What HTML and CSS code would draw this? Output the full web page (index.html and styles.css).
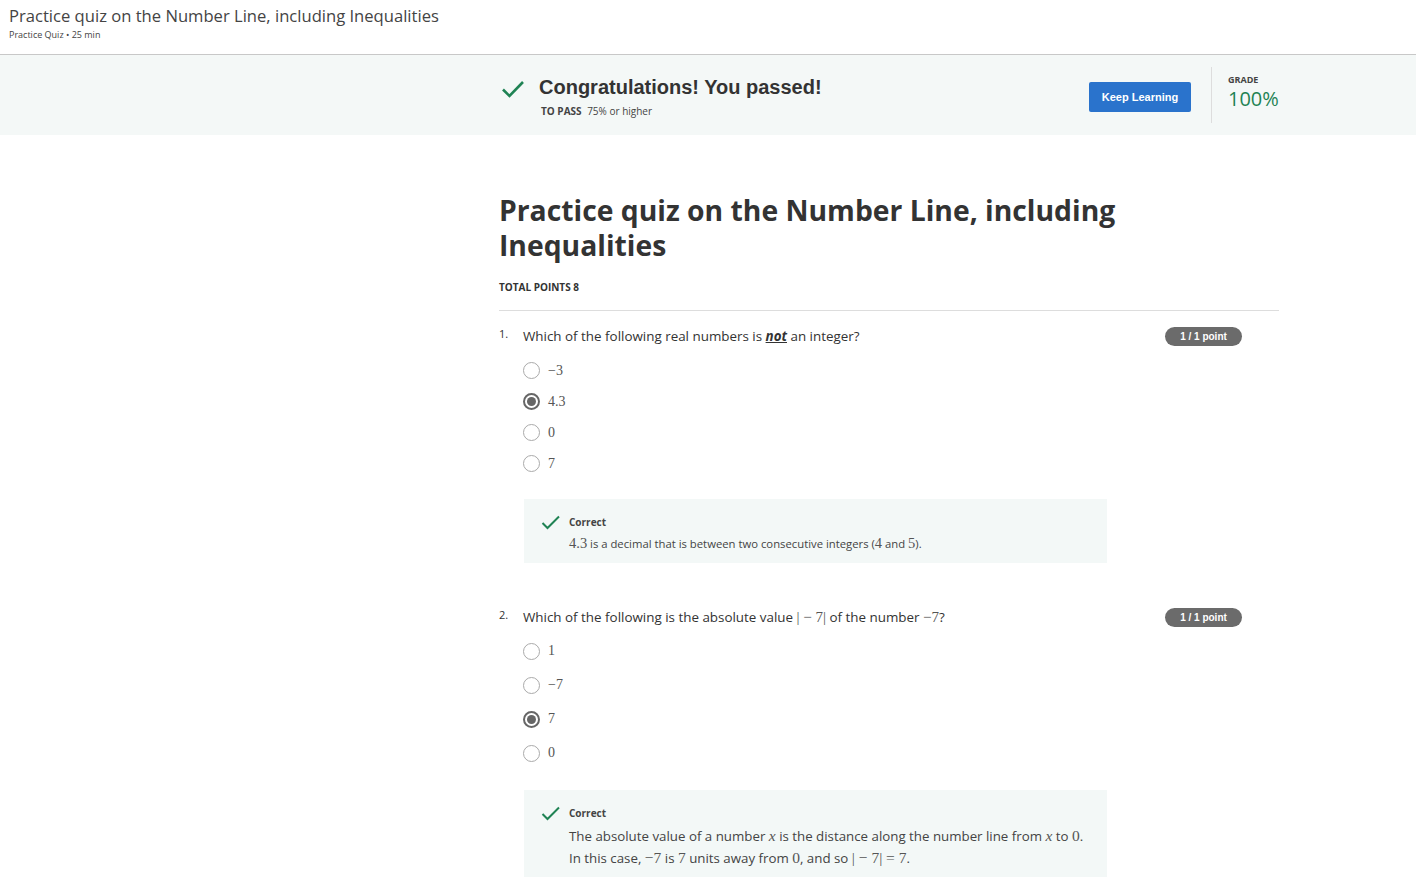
FILE: index.html
```html
<!DOCTYPE html>
<html>
<head>
<meta charset="utf-8">
<link rel="stylesheet" href="styles.css">
</head>
<body>
<header class="top">
  <div class="top-title">Practice quiz on the Number Line, including Inequalities</div>
  <div class="top-sub">Practice Quiz • 25 min</div>
</header>
<section class="band">
  <div class="band-inner">
    <div class="pass">
      <svg class="pass-check" width="24" height="20" viewBox="0 0 24 20"><path d="M2 10.5 L8.5 17 L22 3" fill="none" stroke="#1f8354" stroke-width="2.6"/></svg>
      <div class="pass-text">
        <div class="pass-title">Congratulations! You passed!</div>
        <div class="pass-sub"><b>TO PASS</b> 75% or higher</div>
      </div>
    </div>
    <button class="keep">Keep Learning</button>
    <div class="vsep"></div>
    <div class="grade">
      <div class="grade-label">GRADE</div>
      <div class="grade-val">100%</div>
    </div>
  </div>
</section>
<main class="main">
  <h1 class="quiz-title">Practice quiz on the Number Line, including Inequalities</h1>
  <div class="total">TOTAL POINTS 8</div>
  <div class="divider"></div>

  <div class="q">
    <div class="q-head">
      <span class="q-num">1.</span>
      <span class="q-text">Which of the following real numbers is <b class="not">not</b> an integer?</span>
      <span class="badge">1 / 1 point</span>
    </div>
    <div class="opts opts1">
      <div class="opt"><span class="radio"></span><span class="m">−3</span></div>
      <div class="opt"><span class="radio on"></span><span class="m">4.3</span></div>
      <div class="opt"><span class="radio"></span><span class="m">0</span></div>
      <div class="opt"><span class="radio"></span><span class="m">7</span></div>
    </div>
    <div class="fb fb1">
      <svg class="fb-check" width="20" height="16" viewBox="0 0 20 16"><path d="M1.5 8 L6.5 13 L18 1.5" fill="none" stroke="#1f8354" stroke-width="2"/></svg>
      <div class="fb-body">
        <div class="fb-title">Correct</div>
        <div class="fb-text"><span class="m">4.3</span> is a decimal that is between two consecutive integers (<span class="m">4</span> and <span class="m">5</span>).</div>
      </div>
    </div>
  </div>

  <div class="q q2">
    <div class="q-head">
      <span class="q-num">2.</span>
      <span class="q-text">Which of the following is the absolute value <span class="m">| − 7|</span> of the number <span class="m">−7</span>?</span>
      <span class="badge">1 / 1 point</span>
    </div>
    <div class="opts opts2">
      <div class="opt"><span class="radio"></span><span class="m">1</span></div>
      <div class="opt"><span class="radio"></span><span class="m">−7</span></div>
      <div class="opt"><span class="radio on"></span><span class="m">7</span></div>
      <div class="opt"><span class="radio"></span><span class="m">0</span></div>
    </div>
    <div class="fb fb2">
      <svg class="fb-check" width="20" height="16" viewBox="0 0 20 16"><path d="M1.5 8 L6.5 13 L18 1.5" fill="none" stroke="#1f8354" stroke-width="2"/></svg>
      <div class="fb-body">
        <div class="fb-title">Correct</div>
        <div class="fb-text fb-text-lg">The absolute value of a number <i class="m">x</i> is the distance along the number line from <i class="m">x</i> to <span class="m">0</span>.<br>In this case, <span class="m">−7</span> is <span class="m">7</span> units away from <span class="m">0</span>, and so <span class="m">| − 7| = 7</span>.</div>
      </div>
    </div>
  </div>
</main>
</body>
</html>
```
FILE: styles.css
```css
* { box-sizing: border-box; }
body {
  margin: 0;
  font-family: "Open Sans", "Liberation Sans", sans-serif;
  color: #333;
  background: #fff;
}
.top {
  height: 55px;
  padding: 5px 9px 0;
  border-bottom: 1px solid #c8c8c8;
}
.top-title {
  font-size: 16.6px;
  line-height: 22px;
  color: #444;
}
.top-sub {
  font-size: 9px;
  line-height: 15px;
  color: #444;
}
.band {
  background: #f4f8f7;
  height: 80px;
}
.band-inner {
  margin-left: 501px;
  width: 790px;
  display: flex;
  align-items: center;
  height: 80px;
}
.pass {
  display: flex;
  align-items: flex-start;
  flex: 1;
  padding-top: 2px;
}
.pass-check { margin-top: 4px; margin-right: 14px; }
.pass-title {
  font-family: "Liberation Sans", Arial, sans-serif;
  font-weight: bold;
  font-size: 20px;
  line-height: 24px;
  color: #333;
}
.pass-sub {
  margin-top: 5px;
  margin-left: 2px;
  font-size: 10px;
  color: #444;
}
.pass-sub b { margin-right: 3px; }
.keep {
  font-family: "Liberation Sans", Arial, sans-serif;
  font-weight: bold;
  font-size: 11px;
  color: #fff;
  background: #2a73cc;
  border: none;
  border-radius: 2px;
  width: 102px;
  height: 30px;
  margin-top: 3px;
  margin-right: 20px;
  padding: 0;
}
.vsep {
  width: 1px;
  height: 56px;
  background: #ddd;
  margin-right: 16px;
}
.grade { width: 63px; margin-top: -8px; }
.grade-label {
  font-size: 9px;
  font-weight: bold;
  color: #444;
  line-height: 11px;
}
.grade-val {
  font-size: 20px;
  color: #1f8354;
  line-height: 20px;
  margin-top: 4px;
}
.main {
  margin-left: 499px;
  width: 780px;
  padding-top: 58px;
}
.quiz-title {
  margin: 0;
  font-size: 28.3px;
  font-weight: bold;
  line-height: 35px;
  color: #333;
  width: 640px;
}
.total {
  margin-top: 17px;
  font-size: 10px;
  font-weight: bold;
  color: #333;
}
.divider {
  height: 1px;
  background: #ddd;
  margin-top: 16px;
}
.q { padding-top: 15px; }
.q2 { padding-top: 44px; }
.q-head {
  display: flex;
  align-items: center;
  height: 20px;
}
.q-num {
  width: 24px;
  font-size: 11px;
  color: #333;
  align-self: flex-start;
  margin-top: 0;
}
.q-text {
  flex: 1;
  font-size: 13.4px;
  color: #333;
}
.q-text .m { font-size: 15px; }
.not { font-style: italic; text-decoration: underline; }
.badge {
  font-family: "Liberation Sans", Arial, sans-serif;
  font-weight: bold;
  font-size: 10px;
  color: #fff;
  background: #6b6b6b;
  border-radius: 10px;
  width: 77px;
  height: 19px;
  line-height: 19px;
  text-align: center;
  margin-right: 37px;
}
.m {
  font-family: "Liberation Serif", "DejaVu Serif", serif;
  font-size: 14px;
  color: #555;
}
i.m { font-style: italic; }
.opts { padding-left: 24px; margin-top: 9px; }
.opt {
  display: flex;
  align-items: center;
  height: 31px;
}
.opts2 .opt { height: 34px; }
.opts2 { margin-top: 7px; }
.radio {
  width: 17px;
  height: 17px;
  border: 1px solid #aaa;
  border-radius: 50%;
  margin-right: 8px;
  position: relative;
  background: #fff;
}
.radio.on { border: 2px solid #666; }
.radio.on::after {
  content: "";
  position: absolute;
  left: 2px; top: 2px;
  width: 9px; height: 9px;
  border-radius: 50%;
  background: #666;
}
.fb {
  margin-left: 25px;
  width: 583px;
  background: #f3f8f7;
  display: flex;
  padding: 16px 17px 14px;
}
.fb1 { margin-top: 20px; height: 64px; }
.fb2 { margin-top: 20px; height: 87px; }
.fb-check { margin-right: 8px; margin-top: 0; flex: none; }
.fb-title {
  font-size: 10px;
  font-weight: bold;
  color: #444;
  line-height: 14px;
}
.fb-text {
  font-size: 11.3px;
  color: #444;
  line-height: 21px;
  margin-top: 4px;
}
.fb-text .m { font-size: 14.5px; }
.fb-text-lg { font-size: 13.3px; margin-top: 5px; }
.fb-text-lg .m { font-size: 15.5px; }
```
